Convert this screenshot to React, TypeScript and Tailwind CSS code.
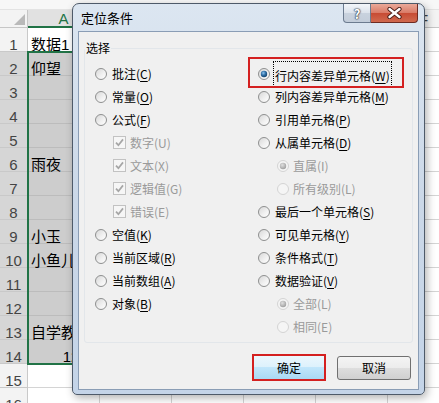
import type { ReactNode } from 'react';

const SHEET_FONT = 'font-[family-name:Liberation_Sans,Noto_Sans_CJK_SC,sans-serif]';
const UI_FONT = 'font-[family-name:Noto_Sans_CJK_SC,Liberation_Sans,sans-serif]';

const rows: { n: number; text?: string; right?: boolean }[] = [
  { n: 1, text: '数据1' },
  { n: 2, text: '仰望' },
  { n: 3 },
  { n: 4 },
  { n: 5 },
  { n: 6, text: '雨夜' },
  { n: 7 },
  { n: 8 },
  { n: 9, text: '小玉' },
  { n: 10, text: '小鱼儿' },
  { n: 11 },
  { n: 12 },
  { n: 13, text: '自学教程' },
  { n: 14, text: '1234', right: true },
  { n: 15 },
  { n: 16 },
];

const Sheet = () => (
  <div className={`flex w-[460px] flex-col ${SHEET_FONT}`}>
    <div className="h-[10px] border-b border-[#e3e3e3] bg-[#f7f7f7]" />
    {/* column headers */}
    <div className="flex h-[18px] bg-[#f3f3f3]">
      <div className="flex w-[28px] shrink-0 items-end justify-end border-r border-b border-[#c6c6c6] pr-[2px] pb-[2px]">
        <svg width="11" height="11" viewBox="0 0 11 11">
          <polygon points="11,0 11,11 0,11" fill="#b9b9b9" />
        </svg>
      </div>
      <div className="flex w-[72px] shrink-0 items-end justify-center border-r border-b-2 border-r-[#c6c6c6] border-b-[#217346] bg-[#e1e1e1] text-[15px] leading-[15px] text-[#217346]">
        A
      </div>
      {['B', 'C', 'D', 'E', 'F'].map((c) => (
        <div
          key={c}
          className="flex w-[72px] shrink-0 items-end justify-center border-r border-b border-[#c6c6c6] text-[15px] leading-[15px] text-[#444]"
        >
          {c}
        </div>
      ))}
    </div>
    {rows.map((r) => {
      const sel = r.n >= 2 && r.n <= 14;
      return (
        <div key={r.n} className="flex h-[24px]">
          <div
            className={`flex w-[28px] shrink-0 items-end justify-center border-r border-b border-[#c9c9c9] text-[15px] leading-[12px] text-[#444] ${
              sel ? 'bg-[#d6d6d6]' : 'bg-[#f3f3f3]'
            }`}
          >
            {r.n}
          </div>
          <div
            className={`flex w-[72px] shrink-0 items-end whitespace-nowrap border-r border-b text-[15px] leading-[13px] text-black ${
              r.right ? 'justify-end pr-[3px]' : 'pl-[3px]'
            } ${sel ? 'border-[#bcbcbc] bg-[#cdcdcd]' : 'border-[#d4d4d4] bg-white'}`}
          >
            {r.text}
          </div>
          {[0, 1, 2, 3, 4].map((i) => (
            <div key={i} className="w-[72px] shrink-0 border-r border-b border-[#d4d4d4] bg-white" />
          ))}
        </div>
      );
    })}
  </div>
);

const Radio = ({ checked = false, disabled = false }: { checked?: boolean; disabled?: boolean }) => (
  <svg width="12" height="12" viewBox="0 0 12 12" className="shrink-0">
    <circle
      cx="6"
      cy="6"
      r="5.5"
      fill={disabled ? '#f5f5f5' : 'url(#rb-bg)'}
      stroke={disabled ? '#d3d3d3' : '#8e8f8f'}
    />
    {checked && (
      <circle cx="6" cy="6" r="3.2" fill={disabled ? 'url(#rb-dot-off)' : 'url(#rb-dot)'} />
    )}
  </svg>
);

const Check = () => (
  <svg width="13" height="13" viewBox="0 0 13 13" className="shrink-0">
    <rect x="0.5" y="0.5" width="12" height="12" fill="#f6f6f6" stroke="#c2c2c2" />
    <path d="M3 6.6 L5.4 9.2 L10 3.4" stroke="#a6a6a6" strokeWidth="1.7" fill="none" />
  </svg>
);

// label with underlined access key, e.g. 批注(C)
const Label = ({ text, k, disabled = false }: { text: string; k: string; disabled?: boolean }) => (
  <span className={`whitespace-nowrap text-[12px] leading-[16px] ${disabled ? 'text-[#9a9a9a]' : 'text-black'}`}>
    {text}(
    {disabled ? k : <span className="underline underline-offset-2">{k}</span>})
  </span>
);

const Opt = ({ children }: { children: ReactNode }) => (
  <div className="flex h-[23px] items-center gap-[5px]">{children}</div>
);

const Dialog = () => (
  <div
    className={`absolute left-[72px] top-[3px] flex h-[392px] w-[353px] flex-col rounded-t-[7px] rounded-b-[5px] border border-[#4e5a69] bg-gradient-to-b from-[#dce6f1] via-[#cbd8e8] to-[#c4d4e8] shadow-[2px_3px_8px_rgba(0,0,0,0.3)] ${UI_FONT}`}
  >
    {/* title bar */}
    <div className="flex h-[27px] shrink-0 items-start justify-between pl-[8px] pr-[6px]">
      <span className="mt-[5px] text-[13px] leading-[17px] text-black">定位条件</span>
      <div className="flex">
        <div className="flex h-[19px] w-[28px] items-center justify-center rounded-bl-[4px] border border-t-0 border-[#6c7b8f] bg-[linear-gradient(#f3f6fa,#dbe2eb_50%,#c9d2de_50%,#c3cdda)] text-[13px] font-bold leading-[13px] text-white [text-shadow:0_0_1px_#2b3440,0_0_1px_#2b3440,0_0_2px_#2b3440]">
          ?
        </div>
        <div className="flex h-[19px] w-[47px] items-center justify-center rounded-br-[4px] border border-t-0 border-l-0 border-[#6e2b22] bg-[linear-gradient(#eaa999,#d97a66_50%,#c74a33_50%,#d06a4f)]">
          <svg width="15" height="12" viewBox="0 0 15 12">
            <path d="M2.5 2 L12.5 10 M12.5 2 L2.5 10" stroke="#4a1c16" strokeWidth="4.2" strokeLinecap="round" />
            <path d="M2.5 2 L12.5 10 M12.5 2 L2.5 10" stroke="#fff" strokeWidth="2.4" strokeLinecap="round" />
          </svg>
        </div>
      </div>
    </div>

    {/* client area */}
    <div className="mx-[5px] mb-[4px] flex flex-1 flex-col border border-[#8a9db5] bg-[#f0f0f0]">
      <fieldset className="mx-[5px] mt-[8px] h-[303px] rounded-[3px] border border-[#e2e6ea]">
        <legend className="px-[1px] text-[12px] leading-[16px] text-black">选择</legend>
        <div className="flex pt-[6px] pl-[10px]">
          <div className="flex w-[163px] flex-col">
            <Opt>
              <Radio />
              <Label text="批注" k="C" />
            </Opt>
            <Opt>
              <Radio />
              <Label text="常量" k="O" />
            </Opt>
            <Opt>
              <Radio />
              <Label text="公式" k="F" />
            </Opt>
            {[
              ['数字', 'U'],
              ['文本', 'X'],
              ['逻辑值', 'G'],
              ['错误', 'E'],
            ].map(([t, k]) => (
              <div key={t} className="flex h-[23px] items-center gap-[4px] pl-[18px]">
                <Check />
                <Label text={t} k={k} disabled />
              </div>
            ))}
            <Opt>
              <Radio />
              <Label text="空值" k="K" />
            </Opt>
            <Opt>
              <Radio />
              <Label text="当前区域" k="R" />
            </Opt>
            <Opt>
              <Radio />
              <Label text="当前数组" k="A" />
            </Opt>
            <Opt>
              <Radio />
              <Label text="对象" k="B" />
            </Opt>
          </div>

          <div className="flex flex-1 flex-col">
            <div className="relative flex h-[23px] items-center gap-[4px]">
              <div className="absolute -left-[10px] -top-[5px] h-[31px] w-[156px] border-2 border-[#d42020]" />
              <Radio checked />
              <span className="px-[1px] outline-1 outline-dotted outline-black">
                <Label text="行内容差异单元格" k="W" />
              </span>
            </div>
            <Opt>
              <Radio />
              <Label text="列内容差异单元格" k="M" />
            </Opt>
            <Opt>
              <Radio />
              <Label text="引用单元格" k="P" />
            </Opt>
            <Opt>
              <Radio />
              <Label text="从属单元格" k="D" />
            </Opt>
            <div className="flex h-[23px] items-center gap-[4px] pl-[19px]">
              <Radio checked disabled />
              <Label text="直属" k="I" disabled />
            </div>
            <div className="flex h-[23px] items-center gap-[4px] pl-[19px]">
              <Radio disabled />
              <Label text="所有级别" k="L" disabled />
            </div>
            <Opt>
              <Radio />
              <Label text="最后一个单元格" k="S" />
            </Opt>
            <Opt>
              <Radio />
              <Label text="可见单元格" k="Y" />
            </Opt>
            <Opt>
              <Radio />
              <Label text="条件格式" k="T" />
            </Opt>
            <Opt>
              <Radio />
              <Label text="数据验证" k="V" />
            </Opt>
            <div className="flex h-[23px] items-center gap-[4px] pl-[19px]">
              <Radio checked disabled />
              <Label text="全部" k="L" disabled />
            </div>
            <div className="flex h-[23px] items-center gap-[4px] pl-[19px]">
              <Radio disabled />
              <Label text="相同" k="E" disabled />
            </div>
          </div>
        </div>
      </fieldset>

      {/* buttons */}
      <div className="mt-[11px] flex items-center justify-end gap-[11px] pr-[7px]">
        <div className="h-[27px] w-[74px] border-2 border-[#d42020]">
          <button className="flex h-full w-full items-center justify-center bg-[linear-gradient(#ecf7fd,#dcf1fc_50%,#c1e6fb_50%,#a9d9f4)] text-[12px] leading-[16px] text-black">
            确定
          </button>
        </div>
        <button className="flex h-[24px] w-[74px] items-center justify-center rounded-[3px] border border-[#707070] bg-[linear-gradient(#f4f4f4,#ececec_50%,#dedede_50%,#d0d0d0)] text-[12px] leading-[16px] text-black">
          取消
        </button>
      </div>
    </div>
  </div>
);

export default function App() {
  return (
    <div className="relative h-[403px] w-[439px] overflow-hidden bg-white">
      <svg width="0" height="0" className="absolute">
        <defs>
          <linearGradient id="rb-bg" x1="0" y1="0" x2="1" y2="1">
            <stop offset="0" stopColor="#d6d6d6" />
            <stop offset="0.6" stopColor="#f2f2f2" />
            <stop offset="1" stopColor="#ffffff" />
          </linearGradient>
          <radialGradient id="rb-dot" cx="0.4" cy="0.35" r="0.7">
            <stop offset="0" stopColor="#8fc4ee" />
            <stop offset="0.5" stopColor="#2f6fa6" />
            <stop offset="1" stopColor="#123f66" />
          </radialGradient>
          <radialGradient id="rb-dot-off" cx="0.4" cy="0.35" r="0.7">
            <stop offset="0" stopColor="#e0e0e0" />
            <stop offset="1" stopColor="#9c9c9c" />
          </radialGradient>
        </defs>
      </svg>
      <Sheet />
      <div className="absolute left-[27px] top-[51px] h-[314px] w-[74px] border-2 border-[#217346]" />
      <Dialog />
    </div>
  );
}
